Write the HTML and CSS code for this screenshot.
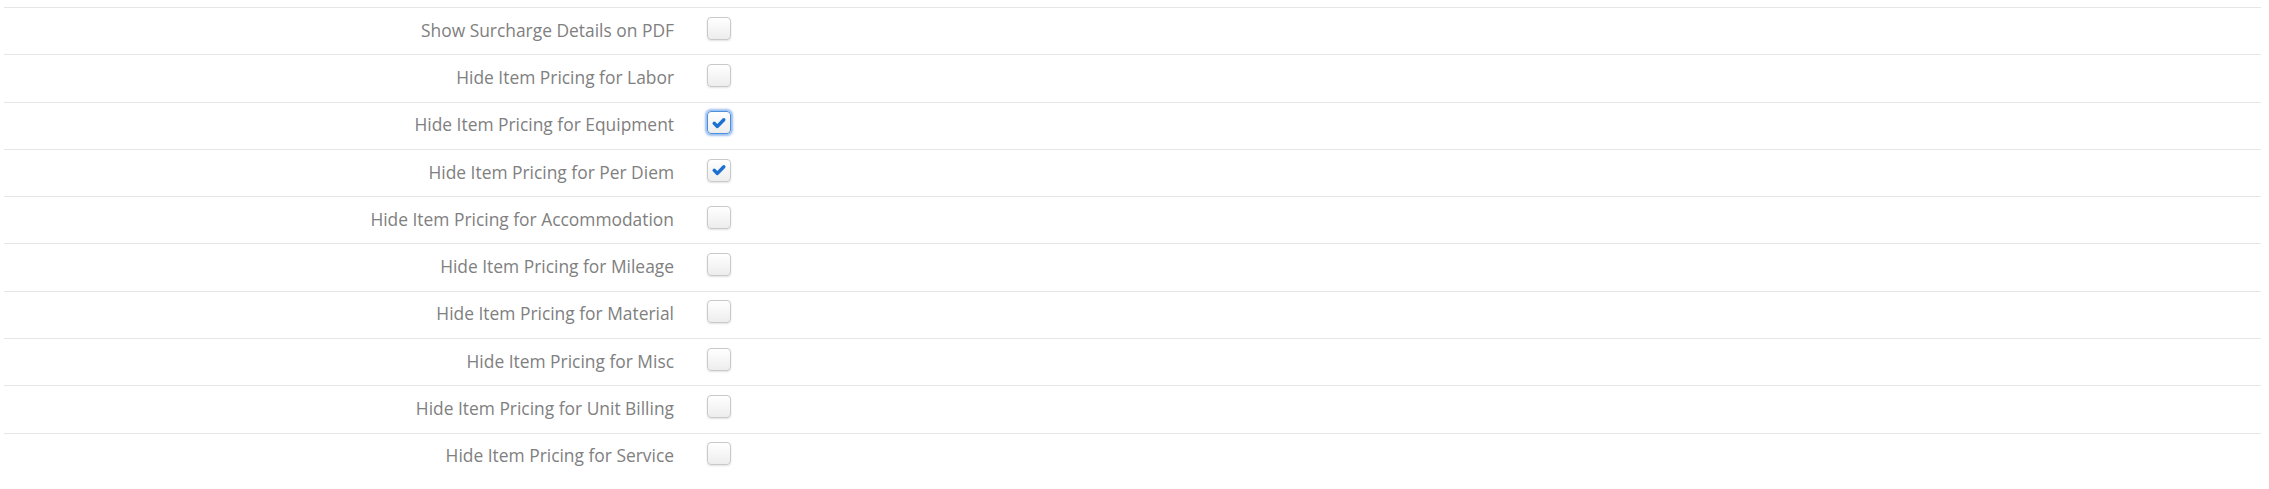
FILE: index.html
```html
<!DOCTYPE html>
<html lang="en">
<head>
    <meta charset="UTF-8">
    <title>PDF Settings</title>
    <link rel="stylesheet" href="styles.css">
</head>
<body>
    <div class="settings">
        <div class="setting-row">
            <label class="setting-label">Show Surcharge Details on PDF</label>
            <span class="check"></span>
        </div>
        <div class="setting-row">
            <label class="setting-label">Hide Item Pricing for Labor</label>
            <span class="check"></span>
        </div>
        <div class="setting-row">
            <label class="setting-label">Hide Item Pricing for Equipment</label>
            <span class="check checked focused">
                <svg viewBox="0 0 14 14"><path d="M2.8 7.3 L5.6 10 L11.2 4.2"/></svg>
            </span>
        </div>
        <div class="setting-row">
            <label class="setting-label">Hide Item Pricing for Per Diem</label>
            <span class="check checked">
                <svg viewBox="0 0 14 14"><path d="M2.8 7.3 L5.6 10 L11.2 4.2"/></svg>
            </span>
        </div>
        <div class="setting-row">
            <label class="setting-label">Hide Item Pricing for Accommodation</label>
            <span class="check"></span>
        </div>
        <div class="setting-row">
            <label class="setting-label">Hide Item Pricing for Mileage</label>
            <span class="check"></span>
        </div>
        <div class="setting-row">
            <label class="setting-label">Hide Item Pricing for Material</label>
            <span class="check"></span>
        </div>
        <div class="setting-row">
            <label class="setting-label">Hide Item Pricing for Misc</label>
            <span class="check"></span>
        </div>
        <div class="setting-row">
            <label class="setting-label">Hide Item Pricing for Unit Billing</label>
            <span class="check"></span>
        </div>
        <div class="setting-row">
            <label class="setting-label">Hide Item Pricing for Service</label>
            <span class="check"></span>
        </div>
    </div>
</body>
</html>
```

FILE: styles.css
```css
* {
    margin: 0;
    padding: 0;
    box-sizing: border-box;
}

body {
    font-family: "Open Sans", Arial, sans-serif;
    background: #ffffff;
    color: #808080;
    padding: 7px 8px 0 4px;
}

.setting-row {
    display: flex;
    align-items: center;
    height: 47.3px;
    border-top: 1px solid #e6e6e6;
}

.setting-label {
    width: 670px;
    text-align: right;
    font-size: 17.4px;
    padding-bottom: 3px;
}

.check {
    display: flex;
    align-items: center;
    justify-content: center;
    width: 24px;
    height: 23px;
    margin-left: 33px;
    margin-top: -6px;
    border: 1px solid #c9c9c9;
    border-radius: 4px;
    background: linear-gradient(#ffffff, #ededed);
    box-shadow: 0 1px 2px rgba(0, 0, 0, 0.12);
}

.check svg {
    width: 16px;
    height: 16px;
    fill: none;
    stroke: #1e6fd2;
    stroke-width: 3;
    stroke-linecap: round;
    stroke-linejoin: round;
}

.check.focused {
    border-color: #4d8fdc;
    box-shadow: 0 0 2px 2px rgba(90, 150, 230, 0.6);
}
```
